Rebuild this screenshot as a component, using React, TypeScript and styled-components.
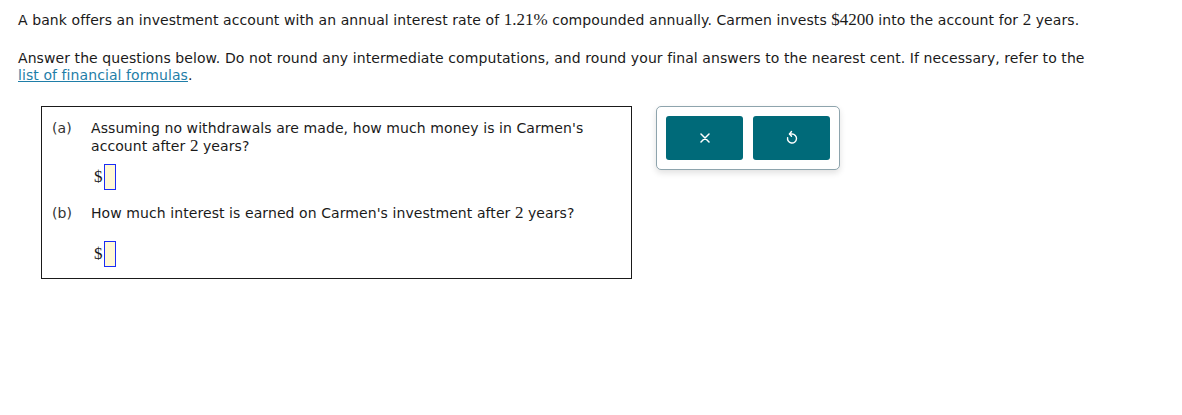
import React from "react";
import styled, { createGlobalStyle } from "styled-components";

const GlobalStyle = createGlobalStyle`
  body {
    margin: 0;
    background: #ffffff;
    font-family: "DejaVu Sans", Verdana, sans-serif;
    font-size: 14px;
    letter-spacing: 0.08px;
    color: #1a1a1a;
  }
`;

// Page layout
const Page = styled.div`
  padding: 11px 18px 0 18px;
`;

const Paragraph = styled.p<{ gap?: number }>`
  margin: 0 0 ${(p) => p.gap ?? 0}px 0;
  line-height: 17px;
  width: 1085px;
`;

const MathNum = styled.span`
  font-family: "Liberation Serif", "Times New Roman", serif;
  font-size: 17px;
  letter-spacing: 0;
`;

const FormulaLink = styled.a`
  color: #1f7ea8;
  text-decoration: underline;
`;

const Workspace = styled.div`
  display: flex;
  align-items: flex-start;
  gap: 24px;
  margin: 22px 0 0 23px;
`;

const QuestionBox = styled.div`
  width: 591px;
  height: 173px;
  border: 1px solid #1a1a1a;
  padding: 12px 10px 0 10px;
  box-sizing: border-box;
`;

const Part = styled.div`
  display: grid;
  grid-template-columns: 39px 1fr;
  line-height: 18px;
`;

const PartLabel = styled.span`
  color: #333;
`;

const AnswerRow = styled.div<{ top: number; bottom: number }>`
  display: flex;
  align-items: center;
  margin: ${(p) => p.top}px 0 ${(p) => p.bottom}px 42px;
  height: 26px;
`;

const Dollar = styled.span`
  font-family: "Liberation Serif", "Times New Roman", serif;
  font-size: 17px;
  margin-right: 1px;
`;

const AnswerInput = styled.span`
  display: inline-block;
  width: 10px;
  height: 24px;
  border: 1px solid #1a2cf5;
  background: #fff8d6;
`;

const ToolPanel = styled.div`
  display: flex;
  gap: 10px;
  padding: 9px;
  border: 1px solid #8ea4ad;
  border-radius: 5px;
  box-shadow: 0 3px 6px rgba(0, 0, 0, 0.12);
  background: #ffffff;
`;

const ToolButton = styled.button`
  width: 77px;
  height: 44px;
  border: none;
  border-radius: 3px;
  background: #006a79;
  color: #ffffff;
  display: flex;
  align-items: center;
  justify-content: center;
  padding: 0;
`;

const CloseIcon = () => (
  <svg width="10" height="10" viewBox="0 0 10 10">
    <path d="M1 1 L9 9 M9 1 L1 9" stroke="#fff" strokeWidth="1.5" strokeLinecap="round" />
  </svg>
);

const ResetIcon = () => (
  <svg width="12" height="16" viewBox="0 0 12 16" fill="none">
    <path
      d="M3.5 4 H6 A4.5 4.5 0 1 1 1.6 7.6"
      stroke="#fff"
      strokeWidth="1.4"
      strokeLinecap="round"
    />
    <path d="M5.5 1.5 L3.5 4 L5.5 6.3" stroke="#fff" strokeWidth="1.4" strokeLinecap="round" strokeLinejoin="round" />
  </svg>
);

const App = (): JSX.Element => {
  return (
    <Page>
      <GlobalStyle />
      <Paragraph gap={21}>
        A bank offers an investment account with an annual interest rate of <MathNum>1.21%</MathNum> compounded
        annually. Carmen invests <MathNum>$4200</MathNum> into the account for <MathNum>2</MathNum> years.
      </Paragraph>
      <Paragraph>
        Answer the questions below. Do not round any intermediate computations, and round your final answers to the
        nearest cent. If necessary, refer to the <FormulaLink href="#">list of financial formulas</FormulaLink>.
      </Paragraph>
      <Workspace>
        <QuestionBox>
          <Part>
            <PartLabel>(a)</PartLabel>
            <span>
              Assuming no withdrawals are made, how much money is in Carmen's
              <br />
              account after <MathNum>2</MathNum> years?
            </span>
          </Part>
          <AnswerRow top={9} bottom={14}>
            <Dollar>$</Dollar>
            <AnswerInput />
          </AnswerRow>
          <Part>
            <PartLabel>(b)</PartLabel>
            <span>
              How much interest is earned on Carmen's investment after <MathNum>2</MathNum> years?
            </span>
          </Part>
          <AnswerRow top={19} bottom={0}>
            <Dollar>$</Dollar>
            <AnswerInput />
          </AnswerRow>
        </QuestionBox>
        <ToolPanel>
          <ToolButton>
            <CloseIcon />
          </ToolButton>
          <ToolButton>
            <ResetIcon />
          </ToolButton>
        </ToolPanel>
      </Workspace>
    </Page>
  );
};

export default App;
